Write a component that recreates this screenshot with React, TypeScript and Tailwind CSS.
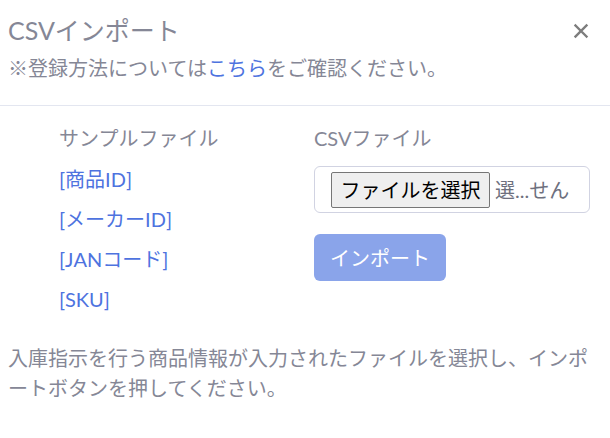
import React from "react";

const FONT = "font-['Lato','Noto_Sans_CJK_JP',sans-serif]";

const SAMPLE_LINKS = ["[商品ID]", "[メーカーID]", "[JANコード]", "[SKU]"];

export default function App() {
  return (
    <div className={`w-[610px] h-[438px] bg-white text-[#858796] ${FONT} text-[20px] leading-[30px]`}>
      {/* Header */}
      <div className="flex items-start justify-between pl-2 pr-[21px] pt-[12px] pb-[22px] border-b border-[#e3e6f0]">
        <div>
          <h5 className="text-[25px] leading-[37px] text-[#858796]">CSVインポート</h5>
          <p className="mt-[4px] text-[20px] leading-[30px]">
            ※登録方法については<a className="text-[#4e73df]">こちら</a>をご確認ください。
          </p>
        </div>
        <button className="mt-[7px] w-4 h-6 flex items-center justify-center" aria-label="Close">
          <svg width="16" height="16" viewBox="0 0 16 16" fill="none">
            <path d="M2.5 2.5L13.5 13.5M13.5 2.5L2.5 13.5" stroke="#7d7d7d" strokeWidth="2.4" strokeLinecap="square" />
          </svg>
        </button>
      </div>

      {/* Body */}
      <div className="pt-[17px] px-2">
        <div className="flex">
          {/* Sample files */}
          <div className="w-[306px] pl-[51px] flex flex-col">
            <span>サンプルファイル</span>
            <div className="mt-[11px] flex flex-col gap-[10px]">
              {SAMPLE_LINKS.map((label) => (
                <a key={label} className="text-[#4e73df]">
                  {label}
                </a>
              ))}
            </div>
          </div>

          {/* CSV file */}
          <div className="flex flex-col items-start">
            <span>CSVファイル</span>
            <div className="mt-[13px] w-[276px] h-[47px] flex items-center pl-4 border border-[#d1d3e2] rounded-[6px] overflow-hidden">
              <span className="h-[36px] w-[159px] flex items-center justify-center border border-[#767676] rounded-[2px] bg-[#efefef] text-black text-[20px] font-['Noto_Sans_CJK_JP',sans-serif] whitespace-nowrap">
                ファイルを選択
              </span>
              <span className="ml-[5px] whitespace-nowrap text-[#6e707e]">選...せん</span>
            </div>
            <button className="mt-[21px] w-[132px] h-[47px] rounded-[6px] bg-[#8aa4ea] text-white text-[20px]">
              インポート
            </button>
          </div>
        </div>

        <p className="mt-[29px]">
          入庫指示を行う商品情報が入力されたファイルを選択し、インポートボタンを押してください。
        </p>
      </div>
    </div>
  );
}
